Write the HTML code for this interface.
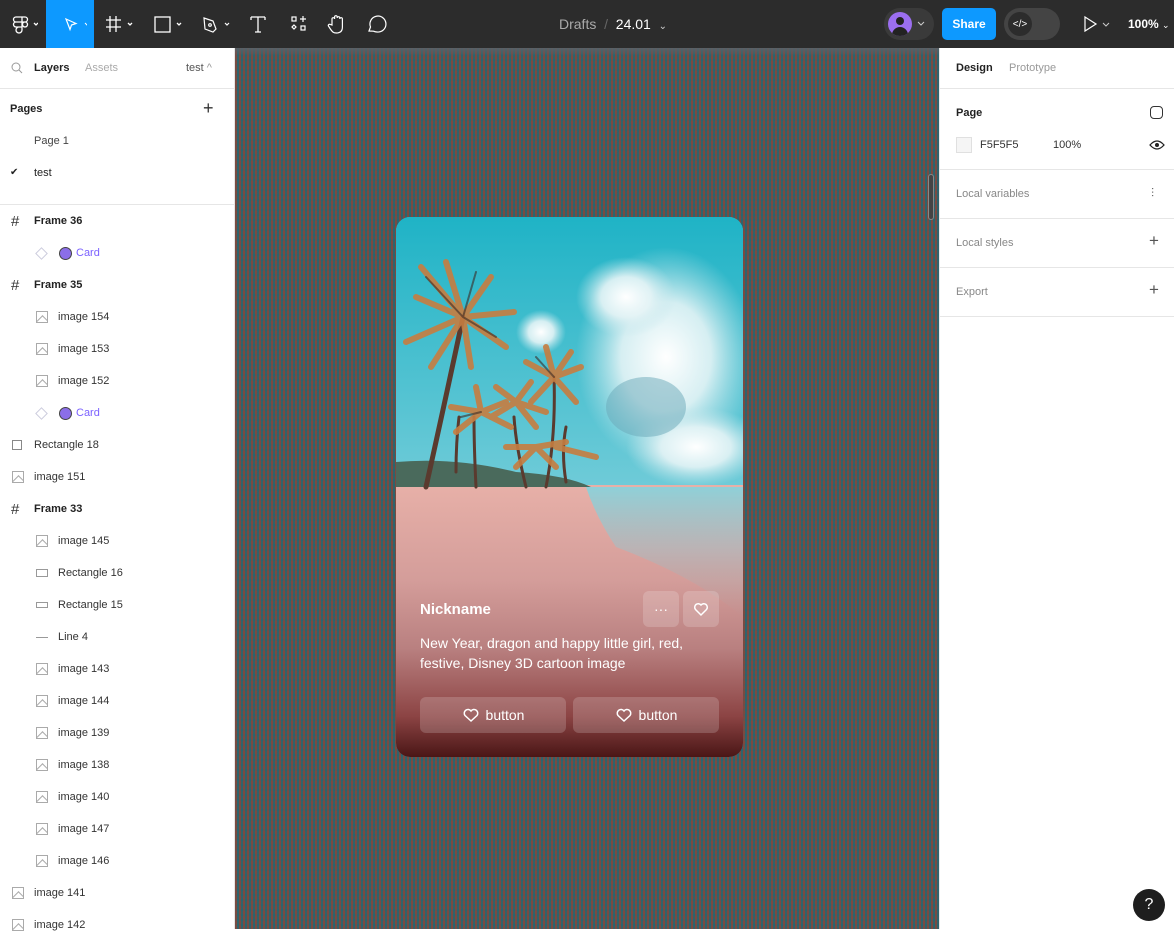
<!DOCTYPE html>
<html><head><meta charset="utf-8"><style>
*{box-sizing:border-box;margin:0;padding:0}
body{width:1174px;height:929px;overflow:hidden;font-family:"Liberation Sans",sans-serif;font-size:11px;color:#222;background:#fff;position:relative}
.top{position:absolute;left:0;top:0;width:1174px;height:48px;background:#2c2c2c}
.ic{position:absolute;top:0;height:48px;display:flex;align-items:center;justify-content:center}
.left{position:absolute;left:0;top:48px;width:235px;height:881px;background:#fff;border-right:1px solid #e6e6e6}
.right{position:absolute;left:939px;top:48px;width:235px;height:881px;background:#fff;border-left:1px solid #e6e6e6}
.canvas{position:absolute;left:235px;top:48px;width:704px;height:881px;background:#4e5a5c;
background-image:repeating-linear-gradient(90deg,rgba(135,70,58,.7) 0 2px,rgba(30,105,118,.7) 2px 4px),repeating-linear-gradient(0deg,rgba(125,68,58,.35) 0 3px,rgba(30,100,112,.35) 3px 5px)}
.row{position:absolute;left:0;width:234px;height:32px;display:flex;align-items:center;font-size:11px;color:#333}
.row .g{position:absolute;width:12px;height:12px}
.im{position:absolute;width:12px;height:12px;border:1px solid #aaa;overflow:hidden}
.im::after{content:"";position:absolute;left:1px;top:5px;width:8px;height:8px;border-top:1px solid #aaa;border-left:1px solid #aaa;transform:rotate(45deg)}
.b{font-weight:bold;color:#222}
.sec{position:absolute;left:16px;font-size:11px}
.hr{position:absolute;left:0;width:235px;height:1px;background:#e6e6e6}
.card{position:absolute;left:396px;top:217px;width:347px;height:540px;border-radius:14px;overflow:hidden;background:#3ab8cc}
.btn{position:absolute;background:rgba(255,255,255,.18);border-radius:6px;color:#fff;display:flex;align-items:center;justify-content:center;font-size:14px}
</style></head><body>
<div class="top">
  <div class="ic" style="left:0;width:46px"><svg width="30" height="20"><g fill="none" stroke="#fff" stroke-width="1.3"><path d="M8 3h6v5H8a2.5 2.5 0 010-5zM14 3h3a2.5 2.5 0 010 5h-3zM8 8h6v5H8a2.5 2.5 0 010-5zM14 13v3a3 3 0 11-3-3zM17 8a2.5 2.5 0 110 5 2.5 2.5 0 010-5z"/><path d="M26 9l2 2 2-2"/></g></svg></div>
  <div class="ic" style="left:46px;width:48px;background:#0d99ff"><svg width="34" height="20"><path d="M15 4l10 4.5-4.5 1.5-1.5 4.5z" fill="none" stroke="#fff" stroke-width="1.2" transform="translate(-2,1)"/><path d="M36 9l2 2 2-2" stroke="#fff" fill="none" transform="translate(-4,0)"/></svg></div>
  <div class="ic" style="left:104px;width:30px"><svg width="30" height="20"><g stroke="#fff" stroke-width="1.3" fill="none"><path d="M6 2v16M12 2v16M2 6h15M2 13h15M24 9l2 2 2-2"/></g></svg></div>
  <div class="ic" style="left:152px;width:34px"><svg width="34" height="20"><g stroke="#fff" stroke-width="1.3" fill="none"><rect x="3" y="3" width="15" height="15"/><path d="M25 9l2 2 2-2"/></g></svg></div>
  <div class="ic" style="left:200px;width:34px"><svg width="34" height="20"><g stroke="#fff" stroke-width="1.2" fill="none"><path d="M4 4l9 3 3 8-3 3-8-3z"/><circle cx="10" cy="11" r="1.3"/><path d="M25 9l2 2 2-2"/></g></svg></div>
  <div class="ic" style="left:248px;width:20px"><svg width="20" height="20"><path d="M3 3h14M10 3v15M7 18h6M3 3v3M17 3v3" stroke="#fff" stroke-width="1.3" fill="none"/></svg></div>
  <div class="ic" style="left:288px;width:22px"><svg width="20" height="20"><g stroke="#fff" stroke-width="1.2" fill="none"><rect x="3" y="3" width="4" height="4"/><rect x="12" y="12" width="4" height="4"/><path d="M5 11l2 2-2 2-2-2zM14 2v6M11 5h6"/></g></svg></div>
  <div class="ic" style="left:326px;width:22px"><svg width="22" height="22"><path d="M6 12V6a1.3 1.3 0 012.6 0V4a1.3 1.3 0 012.6 0v1a1.3 1.3 0 012.6 0v1a1.3 1.3 0 012.6 0v8c0 4-2 6-6 6-3 0-4-1-6-4l-2-3a1.3 1.3 0 012-1.5z" stroke="#fff" stroke-width="1.2" fill="none"/></svg></div>
  <div class="ic" style="left:366px;width:22px"><svg width="22" height="22"><path d="M3 18l1.5-4A8 8 0 1111 19a8 8 0 01-3.5-.8z" stroke="#fff" stroke-width="1.2" fill="none"/></svg></div>
  <div style="position:absolute;left:559px;top:16px;font-size:14px;color:#aaa">Drafts&nbsp;&nbsp;<span style="color:#666">/</span>&nbsp;&nbsp;<span style="color:#fff">24.01</span>&nbsp;&nbsp;<span style="font-size:10px;color:#ccc">⌄</span></div>
  <div style="position:absolute;left:884px;top:8px;width:50px;height:32px;border-radius:16px;background:#3a3a3a"><div style="position:absolute;left:4px;top:4px;width:24px;height:24px;border-radius:50%;background:#9b6ef0;overflow:hidden"><div style="position:absolute;left:8px;top:5px;width:8px;height:8px;border-radius:50%;background:#222"></div><div style="position:absolute;left:4px;top:15px;width:16px;height:12px;border-radius:8px 8px 0 0;background:#222"></div></div><svg style="position:absolute;left:33px;top:13px" width="8" height="6"><path d="M1 1l3 3 3-3" stroke="#ccc" fill="none"/></svg></div>
  <div style="position:absolute;left:942px;top:8px;width:54px;height:32px;border-radius:5px;background:#0d99ff;color:#fff;font-weight:bold;font-size:12px;display:flex;align-items:center;justify-content:center">Share</div>
  <div style="position:absolute;left:1004px;top:8px;width:56px;height:32px;border-radius:16px;background:#444"><div style="position:absolute;left:4px;top:4px;width:24px;height:24px;border-radius:50%;background:#2c2c2c;color:#fff;font-size:10px;display:flex;align-items:center;justify-content:center">&lt;/&gt;</div></div>
  <svg style="position:absolute;left:1082px;top:15px" width="32" height="18"><path d="M3 2l11 7-11 7z" stroke="#fff" stroke-width="1.2" fill="none"/><path d="M21 8l3 3 3-3" stroke="#ccc" fill="none"/></svg>
  <div style="position:absolute;left:1128px;top:17px;color:#fff;font-weight:bold;font-size:12px">100% <span style="font-weight:normal;font-size:9px">⌄</span></div>
</div>

<div class="left">
  <svg style="position:absolute;left:11px;top:14px" width="12" height="12"><circle cx="5" cy="5" r="4" stroke="#999" fill="none"/><path d="M8 8l3 3" stroke="#999"/></svg>
  <div class="sec b" style="left:34px;top:14px">Layers</div>
  <div class="sec" style="left:85px;top:14px;color:#aaa">Assets</div>
  <div class="sec" style="left:186px;top:14px;color:#555">test <span style="color:#999">^</span></div>
  <div class="hr" style="top:40px"></div>
  <div class="sec b" style="left:10px;top:55px">Pages</div>
  <div style="position:absolute;left:203px;top:50px;font-size:18px;color:#333">+</div>
  <div class="sec" style="left:34px;top:87px;color:#444">Page 1</div>
  <div class="sec" style="left:10px;top:119px;font-size:10px">✔</div>
  <div class="sec" style="left:34px;top:119px;color:#222">test</div>
  <div class="hr" style="top:156px"></div>
</div>
<div style="position:absolute;left:0;top:48px">
<div class="row" style="top:157px"><span style="position:absolute;left:11px;font-size:15px">#</span><span class="b" style="position:absolute;left:34px">Frame 36</span></div>
<div class="row" style="top:189px"><span style="position:absolute;left:37px;width:9px;height:9px;border:1px solid #ccd;transform:rotate(45deg)"></span><span style="position:absolute;left:59px;width:13px;height:13px;border-radius:50%;background:#8b6ee8;border:1px solid #444"></span><span style="position:absolute;left:76px;color:#7b61ff">Card</span></div>
<div class="row" style="top:221px"><span style="position:absolute;left:11px;font-size:15px">#</span><span class="b" style="position:absolute;left:34px">Frame 35</span></div>
<div class="row" style="top:253px"><span class="im" style="left:36px"></span><span style="position:absolute;left:58px">image 154</span></div>
<div class="row" style="top:285px"><span class="im" style="left:36px"></span><span style="position:absolute;left:58px">image 153</span></div>
<div class="row" style="top:317px"><span class="im" style="left:36px"></span><span style="position:absolute;left:58px">image 152</span></div>
<div class="row" style="top:349px"><span style="position:absolute;left:37px;width:9px;height:9px;border:1px solid #ccd;transform:rotate(45deg)"></span><span style="position:absolute;left:59px;width:13px;height:13px;border-radius:50%;background:#8b6ee8;border:1px solid #444"></span><span style="position:absolute;left:76px;color:#7b61ff">Card</span></div>
<div class="row" style="top:381px"><span class="g" style="left:12px;width:10px;height:10px;border:1px solid #888"></span><span style="position:absolute;left:34px">Rectangle 18</span></div>
<div class="row" style="top:413px"><span class="im" style="left:12px"></span><span style="position:absolute;left:34px">image 151</span></div>
<div class="row" style="top:445px"><span style="position:absolute;left:11px;font-size:15px">#</span><span class="b" style="position:absolute;left:34px">Frame 33</span></div>
<div class="row" style="top:477px"><span class="im" style="left:36px"></span><span style="position:absolute;left:58px">image 145</span></div>
<div class="row" style="top:509px"><span class="g" style="left:36px;height:8px;border:1px solid #999"></span><span style="position:absolute;left:58px">Rectangle 16</span></div>
<div class="row" style="top:541px"><span class="g" style="left:36px;height:6px;border:1px solid #999"></span><span style="position:absolute;left:58px">Rectangle 15</span></div>
<div class="row" style="top:573px"><span class="g" style="left:36px;height:1px;background:#999"></span><span style="position:absolute;left:58px">Line 4</span></div>
<div class="row" style="top:605px"><span class="im" style="left:36px"></span><span style="position:absolute;left:58px">image 143</span></div>
<div class="row" style="top:637px"><span class="im" style="left:36px"></span><span style="position:absolute;left:58px">image 144</span></div>
<div class="row" style="top:669px"><span class="im" style="left:36px"></span><span style="position:absolute;left:58px">image 139</span></div>
<div class="row" style="top:701px"><span class="im" style="left:36px"></span><span style="position:absolute;left:58px">image 138</span></div>
<div class="row" style="top:733px"><span class="im" style="left:36px"></span><span style="position:absolute;left:58px">image 140</span></div>
<div class="row" style="top:765px"><span class="im" style="left:36px"></span><span style="position:absolute;left:58px">image 147</span></div>
<div class="row" style="top:797px"><span class="im" style="left:36px"></span><span style="position:absolute;left:58px">image 146</span></div>
<div class="row" style="top:829px"><span class="im" style="left:12px"></span><span style="position:absolute;left:34px">image 141</span></div>
<div class="row" style="top:861px"><span class="im" style="left:12px"></span><span style="position:absolute;left:34px">image 142</span></div>
</div>

<div class="canvas"></div>
<div style="position:absolute;left:235px;top:48px;width:704px;height:8px;background:linear-gradient(#5a6066,rgba(90,96,102,0))"></div>
<div style="position:absolute;left:928px;top:174px;width:6px;height:46px;border-radius:3px;background:#444;border:1px solid #888"></div>
<div class="card">
<svg width="347" height="540" style="position:absolute;left:0;top:0">
<defs>
<linearGradient id="sky" x1="0" y1="0" x2="0" y2="1"><stop offset="0" stop-color="#1fb3c6"/><stop offset="1" stop-color="#6fcbd8"/></linearGradient>
<linearGradient id="ground" x1="0" y1="0" x2="0" y2="1"><stop offset="0" stop-color="#e7b0a8"/><stop offset=".35" stop-color="#d49d9a"/><stop offset=".6" stop-color="#b98080"/><stop offset=".85" stop-color="#8c4444"/><stop offset="1" stop-color="#4a1616"/></linearGradient>
<linearGradient id="sea" x1="0" y1="0" x2="0" y2="1"><stop offset="0" stop-color="#8fd0d8"/><stop offset=".5" stop-color="#b0b8bc" stop-opacity=".7"/><stop offset="1" stop-color="#b0a0a0" stop-opacity="0"/></linearGradient>
<radialGradient id="cl"><stop offset="0" stop-color="#fff"/><stop offset=".5" stop-color="#e6f4f6" stop-opacity=".9"/><stop offset="1" stop-color="#bfe4ea" stop-opacity="0"/></radialGradient>
</defs>
<rect width="347" height="270" fill="url(#sky)"/>
<ellipse cx="270" cy="140" rx="90" ry="110" fill="url(#cl)"/>
<ellipse cx="230" cy="80" rx="50" ry="40" fill="url(#cl)"/>
<ellipse cx="300" cy="230" rx="70" ry="40" fill="url(#cl)"/>
<ellipse cx="145" cy="115" rx="25" ry="22" fill="url(#cl)"/>
<ellipse cx="250" cy="190" rx="40" ry="30" fill="#6aa8b8" opacity=".5"/>
<rect y="268" width="347" height="272" fill="url(#ground)"/>
<path d="M190 270H347V400Q300 360 220 330Q200 300 190 270z" fill="url(#sea)"/>
<path d="M0 245Q60 240 120 255Q170 258 195 270H0z" fill="#4a6a5c"/>
<g stroke-linecap="round" fill="none">
<path d="M30 270Q50 180 67 100" stroke="#5a3a2e" stroke-width="5"/>
<path d="M80 270Q78 230 78 200M130 270Q120 230 118 200M150 270Q160 220 158 160M60 255Q60 225 63 200M170 265Q165 235 170 210" stroke="#5a3a2e" stroke-width="3"/>
<g stroke="#c77d40" stroke-width="6" opacity=".9">
<path d="M67 100L20 80M67 100L10 125M67 100L35 150M67 100L75 150M67 100L110 130M67 100L118 95M67 100L95 60M67 100L50 45M67 100L25 50"/>
<path d="M158 160L130 145M158 160L135 185M158 160L185 150M158 160L180 185M158 160L150 130M158 160L175 135"/>
<path d="M85 195L55 190M85 195L60 215M85 195L110 185M85 195L115 210M85 195L80 170"/>
<path d="M120 185L95 200M120 185L150 195M120 185L140 210M120 185L100 170M120 185L135 165"/>
<path d="M140 230L110 230M140 230L170 225M140 230L160 250M140 230L120 250M180 235L160 230M180 235L200 240"/>
</g>
<g stroke="#3a2a24" stroke-width="2" opacity=".6">
<path d="M67 100L30 60M67 100L100 120M67 100L80 55M158 160L140 140M85 195L65 200"/>
</g>
</g>
</svg>
  <div style="position:absolute;left:24px;top:384px;color:#fff;font-weight:bold;font-size:15px">Nickname</div>
  <div class="btn" style="left:247px;top:374px;width:36px;height:36px;border-radius:6px;font-size:14px">···</div>
  <div class="btn" style="left:287px;top:374px;width:36px;height:36px"><svg width="16" height="16"><path d="M8 14L2.5 8.5A3.2 3.2 0 018 4a3.2 3.2 0 015.5 4.5z" stroke="#fff" stroke-width="1.5" fill="none"/></svg></div>
  <div style="position:absolute;left:24px;top:416px;width:300px;color:#fff;font-size:14px;line-height:20px">New Year, dragon and happy little girl, red, festive, Disney 3D cartoon image</div>
  <div class="btn" style="left:24px;top:480px;width:146px;height:36px"><svg width="18" height="16" style="margin-right:6px"><path d="M9 14L3 8.5A3.3 3.3 0 019 4a3.3 3.3 0 016 4.5z" stroke="#fff" stroke-width="1.5" fill="none"/></svg>button</div>
  <div class="btn" style="left:177px;top:480px;width:146px;height:36px"><svg width="18" height="16" style="margin-right:6px"><path d="M9 14L3 8.5A3.3 3.3 0 019 4a3.3 3.3 0 016 4.5z" stroke="#fff" stroke-width="1.5" fill="none"/></svg>button</div>
</div>

<div class="right">
  <div class="sec b" style="top:14px">Design</div>
  <div class="sec" style="left:69px;top:14px;color:#999">Prototype</div>
  <div class="hr" style="top:40px"></div>
  <div class="sec b" style="top:59px">Page</div>
  <div style="position:absolute;left:210px;top:58px;width:13px;height:13px;border:1.3px solid #333;border-radius:4px"></div>
  <div style="position:absolute;left:16px;top:89px;width:16px;height:16px;background:#f5f5f5;border:1px solid #e0e0e0"></div>
  <div class="sec" style="left:40px;top:91px;color:#333">F5F5F5</div>
  <div class="sec" style="left:113px;top:91px;color:#333">100%</div>
  <svg style="position:absolute;left:209px;top:91px" width="16" height="12"><path d="M1 6q7-8 14 0-7 8-14 0z" stroke="#222" stroke-width="1.3" fill="none"/><circle cx="8" cy="6" r="2" fill="#222"/></svg>
  <div class="hr" style="top:121px"></div>
  <div class="sec" style="top:140px;color:#888">Local variables</div>
  <div style="position:absolute;left:211px;top:138px;font-size:12px;color:#555">⫶</div>
  <div class="hr" style="top:170px"></div>
  <div class="sec" style="top:189px;color:#888">Local styles</div>
  <div style="position:absolute;left:209px;top:183px;font-size:17px;color:#555">+</div>
  <div class="hr" style="top:219px"></div>
  <div class="sec" style="top:238px;color:#888">Export</div>
  <div style="position:absolute;left:209px;top:232px;font-size:17px;color:#555">+</div>
  <div class="hr" style="top:268px"></div>
  <div style="position:absolute;left:193px;top:841px;width:32px;height:32px;border-radius:50%;background:#1e1e1e;color:#fff;font-size:16px;display:flex;align-items:center;justify-content:center">?</div>
</div>
</body></html>
